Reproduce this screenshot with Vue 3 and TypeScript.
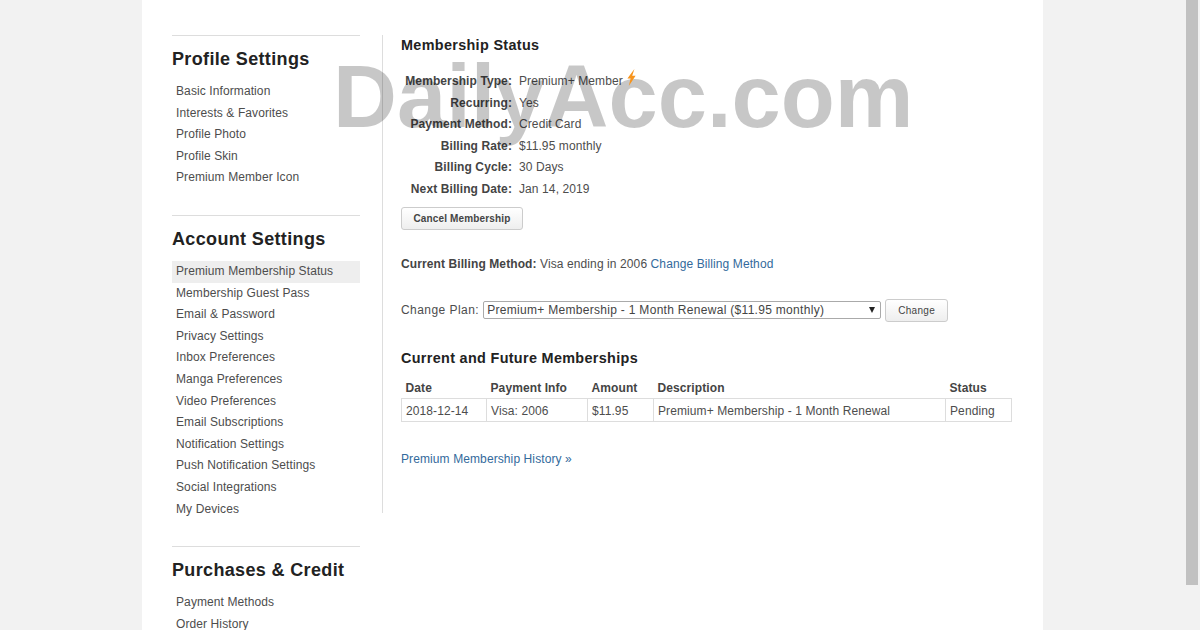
<script setup lang="ts">
const sections = [
  { title: 'Profile Settings', items: ['Basic Information', 'Interests & Favorites', 'Profile Photo', 'Profile Skin', 'Premium Member Icon'] },
  { title: 'Account Settings', items: ['Premium Membership Status', 'Membership Guest Pass', 'Email & Password', 'Privacy Settings', 'Inbox Preferences', 'Manga Preferences', 'Video Preferences', 'Email Subscriptions', 'Notification Settings', 'Push Notification Settings', 'Social Integrations', 'My Devices'] },
  { title: 'Purchases & Credit', items: ['Payment Methods', 'Order History'] },
]
const status = [
  ['Membership Type:', 'Premium+ Member'],
  ['Recurring:', 'Yes'],
  ['Payment Method:', 'Credit Card'],
  ['Billing Rate:', '$11.95 monthly'],
  ['Billing Cycle:', '30 Days'],
  ['Next Billing Date:', 'Jan 14, 2019'],
]
</script>

<template>
  <div class="page">
    <div class="gutter"></div>
    <main class="sheet">
      <aside class="side">
        <section v-for="s in sections" :key="s.title" class="group">
          <h2>{{ s.title }}</h2>
          <ul>
            <li v-for="i in s.items" :key="i" :class="{ on: i === 'Premium Membership Status' }">{{ i }}</li>
          </ul>
        </section>
      </aside>
      <div class="content">
        <h3 class="h-first">Membership Status</h3>
        <div class="status">
          <div v-for="r in status" :key="r[0]" class="row">
            <span class="k">{{ r[0] }}</span>
            <span class="v">{{ r[1] }}<svg v-if="r[0] === 'Membership Type:'" class="bolt" viewBox="0 0 10 17" width="10" height="17"><path d="M8.4 0 1.4 9.6h3.2L2.8 17 9.6 6.8H6.2z" fill="#f7941d"/></svg></span>
          </div>
        </div>
        <button class="btn cancel" type="button">Cancel Membership</button>
        <p class="billing"><b>Current Billing Method:</b> Visa ending in 2006 <a>Change Billing Method</a></p>
        <div class="plan">
          <span class="plan-label">Change Plan:</span>
          <div class="select">
            <span>Premium+ Membership - 1 Month Renewal ($11.95 monthly)</span>
            <i class="arrow"></i>
          </div>
          <button class="btn change" type="button">Change</button>
        </div>
        <h3 class="h-second">Current and Future Memberships</h3>
        <table>
          <thead>
            <tr>
              <th class="c1">Date</th><th class="c2">Payment Info</th><th class="c3">Amount</th><th class="c4">Description</th><th class="c5">Status</th>
            </tr>
          </thead>
          <tbody>
            <tr>
              <td>2018-12-14</td><td>Visa: 2006</td><td>$11.95</td><td>Premium+ Membership - 1 Month Renewal</td><td>Pending</td>
            </tr>
          </tbody>
        </table>
        <a class="history">Premium Membership History »</a>
      </div>
    </main>
    <div class="track"><div class="thumb"></div></div>
    <div class="mark">DailyAcc.com</div>
  </div>
</template>

<style>
html, body { margin: 0; background: #f2f2f2; }
</style>

<style scoped>
.page { position: relative; display: flex; width: 1200px; height: 630px; overflow: hidden; background: #f2f2f2; font-family: "Liberation Sans", Arial, sans-serif; font-size: 12px; color: #4d4d4d; letter-spacing: 0.1px; }
.gutter { width: 142px; flex: none; }
.sheet { width: 901px; flex: none; box-sizing: border-box; background: #fff; padding: 35px 0 0 30px; display: flex; align-items: flex-start; }
.side { width: 188px; flex: none; }
.group { border-top: 1px solid #ddd; padding-top: 10px; margin-bottom: 26px; }
.group h2 { margin: 0 0 9px; font-size: 18px; line-height: 26px; font-weight: 700; color: #222; letter-spacing: 0.35px; white-space: nowrap; }
.group ul { list-style: none; margin: 0; padding: 0; }
.group li { height: 21.6px; line-height: 21.6px; padding-left: 4px; white-space: nowrap; }
.group li.on { background: #eee; }
.content { margin-left: 22px; width: 641px; height: 478px; flex: none; box-sizing: border-box; border-left: 1px solid #ddd; padding-left: 18px; }
h3 { margin: 0; font-size: 14.4px; font-weight: 700; color: #222; line-height: 20px; letter-spacing: 0.33px; }
.h-first { margin-bottom: 16px; }
.row { display: flex; height: 21.6px; line-height: 21.6px; }
.k { width: 111px; flex: none; text-align: right; font-weight: 700; color: #444; white-space: nowrap; }
.v { margin-left: 7px; white-space: nowrap; position: relative; }
.bolt { position: absolute; z-index: 1; left: 100%; top: -2px; margin-left: 3px; }
.btn { box-sizing: border-box; display: block; height: 23px; padding: 0; border: 1px solid #ccc; border-radius: 3px; background: linear-gradient(#fff, #eee); font: 700 10px/21px "Liberation Sans", Arial, sans-serif; color: #444; letter-spacing: 0.15px; }
.cancel { width: 122px; margin-top: 6px; }
.billing { margin: 26px 0 0; line-height: 16px; }
.billing b { font-weight: 700; color: #444; }
a { color: #336a9c; }
.plan { display: flex; align-items: center; margin-top: 27px; letter-spacing: 0.3px; }
.plan-label { letter-spacing: 0.45px; }
.select { box-sizing: border-box; display: flex; align-items: center; justify-content: space-between; width: 398px; height: 18px; margin-left: 4px; padding: 0 5px 0 3px; border: 1px solid #aaa; border-radius: 2px; color: #444; }
.arrow { width: 0; height: 0; border: 3px solid transparent; border-top: 6px solid #222; border-bottom: 0; }
.change { width: 63px; margin-left: 4px; font-weight: 400; letter-spacing: 0.3px; }
.h-second { margin-top: 26px; }
table { border-collapse: collapse; table-layout: fixed; width: 610px; margin-top: 11px; }
th { height: 20px; padding: 0 4px; text-align: left; font-weight: 700; color: #444; line-height: 19px; }
td { height: 23px; box-sizing: border-box; padding: 1px 4px 0; border: 1px solid #ddd; line-height: 20px; white-space: nowrap; }
.c1 { width: 85px; box-sizing: border-box; }
.c2 { width: 101px; box-sizing: border-box; }
.c3 { width: 66px; box-sizing: border-box; }
.c4 { width: 292px; box-sizing: border-box; }
.c5 { width: 66px; box-sizing: border-box; }
.history { display: block; margin-top: 28px; line-height: 18px; }
.track { flex: 1; padding-left: 143px; }
.thumb { width: 12px; height: 585px; background: #c1c1c1; }
.mark { position: absolute; left: 333px; top: 47px; font-size: 88.5px; line-height: 100px; font-weight: 700; color: rgba(0, 0, 0, 0.22); letter-spacing: 0; white-space: nowrap; pointer-events: none; }
</style>
